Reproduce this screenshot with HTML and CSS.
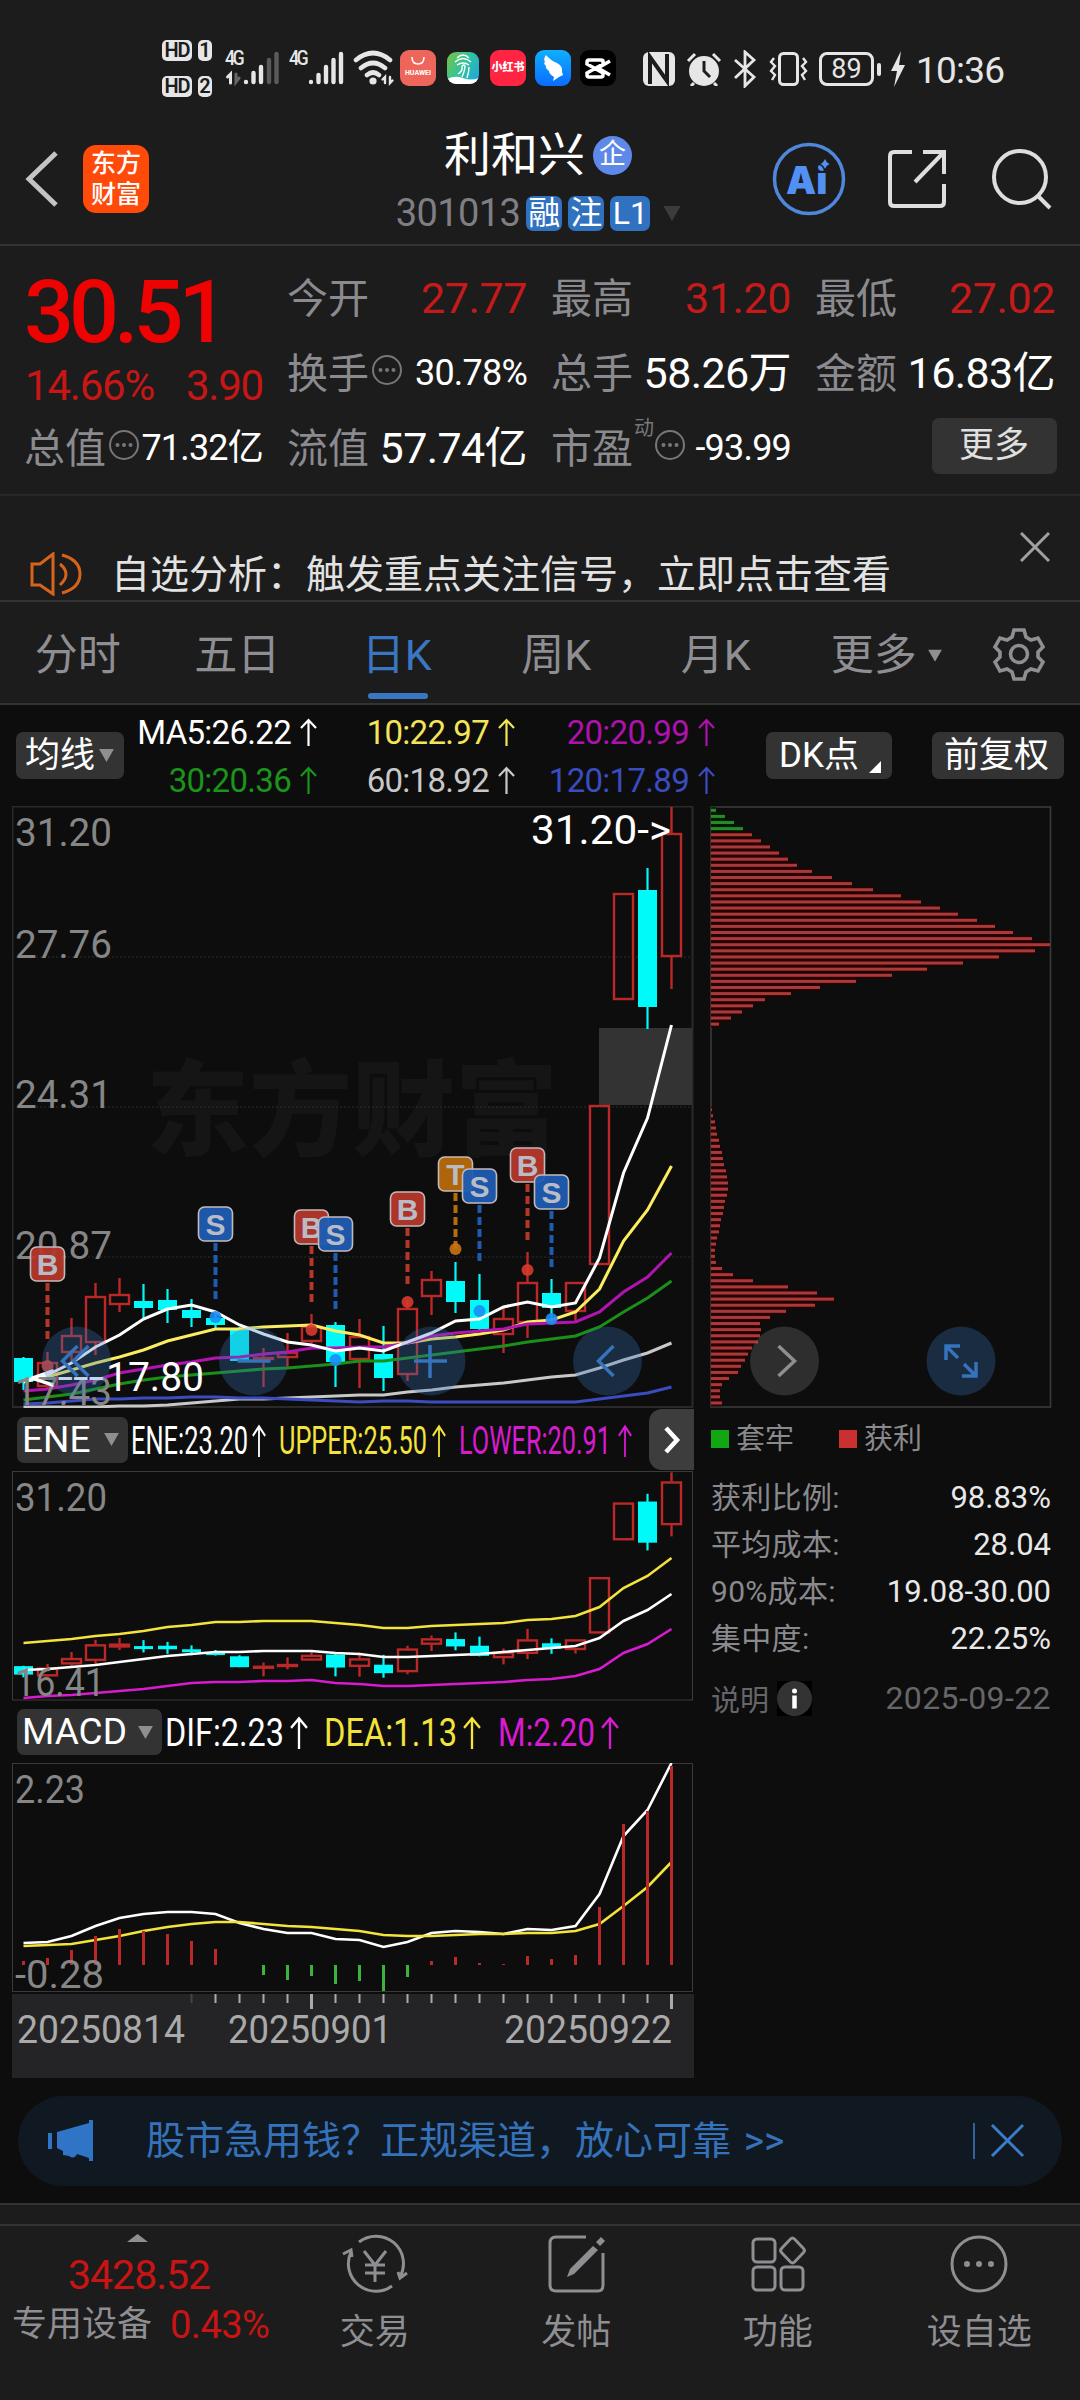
FILE: index.html
```html
<!DOCTYPE html>
<html lang="zh-CN">
<head>
    <meta charset="UTF-8">
    <meta name="viewport" content="width=device-width, initial-scale=1.0">
    <title>利和兴 301013</title>
    <link rel="stylesheet" href="styles.css">
</head>
<body>
    <svg class="defs" width="0" height="0">
        <symbol id="up" viewBox="0 0 17 28"><path d="M8.5 28V2M1 10l7.5-8 7.5 8" fill="none" stroke="currentColor" stroke-width="2.2"/></symbol>
        <symbol id="more-dots" viewBox="0 0 32 32"><circle cx="16" cy="16" r="14" fill="none" stroke="currentColor" stroke-width="2"/><circle cx="9.5" cy="16" r="2" fill="currentColor"/><circle cx="16" cy="16" r="2" fill="currentColor"/><circle cx="22.5" cy="16" r="2" fill="currentColor"/></symbol>
        <symbol id="tri" viewBox="0 0 16 14"><path d="M0 0h16L8 14z" fill="currentColor"/></symbol>
    </svg>

    <div class="status-bar">
        <div class="hd">
            <div><b>HD</b><b>1</b></div>
            <div><b>HD</b><b>2</b></div>
        </div>
        <div class="signal">
            <span>4G</span>
            <svg width="56" height="36" viewBox="0 0 56 36" stroke="#e6e6e6" stroke-width="4.4" stroke-linecap="round">
                <path d="M5.5 33V24l-3 3" fill="none" stroke-width="3"/><path d="M11 24v8l3-4" fill="none" stroke="#666" stroke-width="3"/>
                <path d="M21 32v0M28.5 32v-9M36 32V17"/><path d="M44 32V10M51.5 32V4" stroke="#5a5a5a"/>
            </svg>
        </div>
        <div class="signal second">
            <span>4G</span>
            <svg width="56" height="36" viewBox="0 0 56 36" stroke="#e6e6e6" stroke-width="4.4" stroke-linecap="round">
                <path d="M22 32v0M29.5 32v-7M37 32V17M44.5 32V10M52 32V4"/>
            </svg>
        </div>
        <svg class="wifi" width="42" height="36" viewBox="0 0 42 36" fill="none" stroke="#e6e6e6" stroke-width="4.6" stroke-linecap="round">
            <path d="M3 10Q20-4 37 10M8 18Q20 8 32 18M14 25Q20 20 26 25"/><circle cx="20" cy="31" r="3.6" fill="#e6e6e6" stroke="none"/>
            <path d="M32 33v-6l-2.5 2.500M37 27v6l2.500-2.500" stroke-width="2.4"/>
        </svg>
        <div class="app huawei"><svg width="20" height="10" viewBox="0 0 20 10"><path d="M4 1q0 7 6 7t6-7" fill="none" stroke="#fff" stroke-width="1.6"/></svg>HUAWEI</div>
        <div class="app finger">
            <svg width="32" height="32" viewBox="0 0 32 32" fill="none" stroke="#fff" stroke-width="1.4"><path d="M10 6q6-6 12 0M8 10q8-7 16 0M10 13q6-4 12 0M11 22q5-3 4-8 2-2 3 0 0 4-3 11M20 26q2-6 2-11"/><path d="M0 27q8-4 16-1t16 0v6H0z" fill="#fff" stroke="none"/></svg>
        </div>
        <div class="app redbook">小红书</div>
        <div class="app wing"><svg width="36" height="36" viewBox="0 0 36 36"><path d="M11 5q4 5 11 8 6 3 5 9l1 3-4 2-6 4 1-4q-5-3-5-6-4-3-3-5-3-3-1-4-2-3 1-7z" fill="#fff"/></svg></div>
        <div class="app capcut"><svg width="36" height="36" viewBox="0 0 36 36" fill="none" stroke="#fff" stroke-width="3.5"><path d="M30 11 18 18l12 7M23 14v-3q0-1-2-1H9q-2 0-2 2v2l16 9v2q0 2-2 2H9q-2 0-2-2v-2l16-9"/></svg></div>
        <div class="status-right">
            <svg width="32" height="34" viewBox="0 0 32 34" fill="none"><rect width="32" height="34" rx="6" fill="#e6e6e6"/><path d="M7 32V5l17 24V2" stroke="#1c1c1c" stroke-width="4"/></svg>
            <svg width="36" height="34" viewBox="0 0 36 34"><circle cx="18" cy="19" r="15" fill="#e6e6e6"/><path d="M2 9l7-7M34 9l-7-7M8 31l-3 3M28 31l3 3" stroke="#e6e6e6" stroke-width="3"/><path d="M18 9v10l6 6" fill="none" stroke="#1c1c1c" stroke-width="3"/></svg>
            <svg width="24" height="38" viewBox="0 0 24 38" fill="none" stroke="#e6e6e6" stroke-width="2.8"><path d="M2 10l19 17-9 9V2l9 8L2 28"/></svg>
            <svg width="40" height="34" viewBox="0 0 40 34" fill="none" stroke="#e6e6e6" stroke-width="3"><rect x="11.5" y="1.5" width="18" height="31" rx="4"/><path d="M6 6 3 10l4 4-4 5 4 4-3 5M35 6l3 4-4 4 4 5-4 4 3 5" stroke-width="2.4"/></svg>
            <div class="battery">89</div>
            <svg width="14" height="36" viewBox="0 0 14 36"><path d="M10 0 0 20h6L3 36l11-22H8z" fill="#e6e6e6"/></svg>
            <span class="clock">10:36</span>
        </div>
    </div>

    <header class="header">
        <div class="header-left">
            <svg width="34" height="56" viewBox="0 0 34 56"><path d="M31 2 4 28l27 26" fill="none" stroke="#c4c4c4" stroke-width="5"/></svg>
            <div class="logo">东方<br>财富</div>
        </div>
        <div class="header-title">
            <div class="name">利和兴<span class="company">企</span></div>
            <div class="code"><span>301013</span><i>融</i><i>注</i><i class="wide">L1</i><svg width="22" height="15"><use href="#tri"/></svg></div>
        </div>
        <div class="header-right">
            <svg width="74" height="74" viewBox="0 0 74 74">
                <circle cx="37" cy="37" r="34.5" fill="none" stroke="#4e87dc" stroke-width="3.5"/>
                <text x="14" y="52" class="ai">Ai</text>
                <path d="M53 14q1 7 7 8-6 1-7 8-1-7-7-8 6-1 7-8z" fill="#5291f4" stroke="#1c1c1c" stroke-width="1.5"/>
            </svg>
            <svg width="60" height="60" viewBox="0 0 60 60" fill="none" stroke="#dedede" stroke-width="4"><path d="M25 3H7q-4 0-4 4v46q0 4 4 4h46q4 0 4-4V35M36 3h21v22M57 3 28 33"/></svg>
            <svg width="60" height="62" viewBox="0 0 60 62" fill="none" stroke="#dedede" stroke-width="4"><circle cx="28" cy="29" r="26"/><path d="M46 48l12 12"/></svg>
        </div>
    </header>

    <section class="quote">
        <div class="price-box">
            <div class="price">30.51</div>
            <div class="change"><span>14.66%</span><span>3.90</span></div>
        </div>
        <div class="cell"><label>今开</label><span class="red">27.77</span></div>
        <div class="cell"><label>最高</label><span class="red">31.20</span></div>
        <div class="cell"><label>最低</label><span class="red">27.02</span></div>
        <div class="cell small"><label>换手</label><svg><use href="#more-dots"/></svg><span>30.78%</span></div>
        <div class="cell"><label>总手</label><span>58.26万</span></div>
        <div class="cell"><label>金额</label><span>16.83亿</span></div>
        <div class="cell small"><label>总值</label><svg><use href="#more-dots"/></svg><span>71.32亿</span></div>
        <div class="cell"><label>流值</label><span>57.74亿</span></div>
        <div class="cell small"><label>市盈</label><sup>动</sup><svg><use href="#more-dots"/></svg><span>-93.99</span></div>
        <div class="cell last"><button>更多</button></div>
    </section>

    <section class="notice">
        <svg width="52" height="44" viewBox="0 0 52 44" fill="none" stroke="#d8641c" stroke-width="3"><path d="M2 12h8L23 2v40L10 33H2zM30 12q12 10 0 21M32 3q18 5 18 19T32 41"/></svg>
        <p>自选分析：触发重点关注信号，立即点击查看</p>
        <svg class="close" width="30" height="30" viewBox="0 0 30 30"><path d="M1 1l28 28M29 1 1 29" stroke="#a0a0a0" stroke-width="3"/></svg>
    </section>

    <nav class="tabs">
        <div>分时</div>
        <div>五日</div>
        <div class="active">日K</div>
        <div>周K</div>
        <div>月K</div>
        <div>更多<svg width="14" height="13" viewBox="0 0 16 14"><use href="#tri"/></svg></div>
        <div class="gear">
            <svg width="54" height="54" viewBox="0 0 54 54" fill="none" stroke="#8e8e93" stroke-width="3.6"><circle cx="27" cy="27" r="8.5"/><path d="M22 3h10l2 7 5 3 7-2 5 9-5 5v5l5 5-5 9-7-2-5 3-2 7H22l-2-7-5-3-7 2-5-9 5-5v-5l-5-5 5-9 7 2 5-3z"/></svg>
        </div>
    </nav>

    <div class="ma-row">
        <button class="ma-select">均线<svg width="15" height="13" viewBox="0 0 16 14"><use href="#tri"/></svg></button>
        <div class="ma-values">
            <span class="ma5">MA5:26.22<svg><use href="#up"/></svg></span>
            <span class="ma10">10:22.97<svg><use href="#up"/></svg></span>
            <span class="ma20">20:20.99<svg><use href="#up"/></svg></span>
            <span class="ma30">30:20.36<svg><use href="#up"/></svg></span>
            <span class="ma60">60:18.92<svg><use href="#up"/></svg></span>
            <span class="ma120">120:17.89<svg><use href="#up"/></svg></span>
        </div>
        <button class="dk">DK点<svg width="12" height="12"><path d="M12 0v12H0z" fill="#fff"/></svg></button>
        <button class="fq">前复权</button>
    </div>

    <main class="charts">
        <div class="left">
            <svg id="kline" width="682" height="602" viewBox="12 806 682 602"></svg>
            <div class="indicator ene-bar">
                <button>ENE<svg width="15" height="13" viewBox="0 0 16 14"><use href="#tri"/></svg></button>
                <svg id="ene-values" width="510" height="46" viewBox="130 1416 510 46"></svg>
                <div class="next"><svg width="18" height="30" viewBox="0 0 18 30"><path d="M3 3l11 12L3 27" fill="none" stroke="#fff" stroke-width="4.5"/></svg></div>
            </div>
            <svg id="ene" width="682" height="230" viewBox="12 1471 682 230"></svg>
            <div class="indicator macd-bar">
                <button>MACD<svg width="15" height="13" viewBox="0 0 16 14"><use href="#tri"/></svg></button>
                <svg id="macd-values" width="470" height="46" viewBox="164 1708 470 46"></svg>
            </div>
            <svg id="macd" width="682" height="230" viewBox="12 1763 682 230"></svg>
            <svg id="dates" width="682" height="84" viewBox="12 1994 682 84"></svg>
        </div>
        <div class="right">
            <svg id="chips" width="342" height="602" viewBox="710 806 342 602"></svg>
            <div class="legend"><span class="lock">套牢</span><span class="gain">获利</span></div>
            <dl>
                <dt>获利比例:</dt><dd>98.83%</dd>
                <dt>平均成本:</dt><dd>28.04</dd>
                <dt>90%成本:</dt><dd>19.08-30.00</dd>
                <dt>集中度:</dt><dd>22.25%</dd>
            </dl>
            <div class="explain"><span>说明</span><div class="info"><svg width="35" height="35" viewBox="0 0 35 35"><circle cx="17.5" cy="17.5" r="17.5" fill="#333"/><circle cx="17.5" cy="10" r="2.5" fill="#fff"/><path d="M17.5 14.500v13" stroke="#fff" stroke-width="4.5"/></svg></div><time>2025-09-22</time></div>
        </div>
    </main>

    <div class="ad">
        <svg width="46" height="42" viewBox="0 0 46 42" fill="#2f74c5"><path d="M0 13h4v16H0zM9 12 41 3V0h4v41h-4v-3l-12-4q-3 6-8 2l-6-1v-4l-6-3z"/></svg>
        <p>股市急用钱？正规渠道，放心可靠 <span>&gt;&gt;</span></p>
        <svg class="ad-close" width="52" height="38" viewBox="0 0 52 38" fill="none" stroke="#3b7cc9"><path d="M1 1v36" stroke-width="1.5"/><path d="M19 3l31 31M50 3 19 34" stroke-width="3"/></svg>
    </div>

    <div class="strip"></div>
    <footer class="bottom-nav">
        <div class="index">
            <svg width="21" height="8" viewBox="0 0 21 8"><path d="M0 8h21L10.500 0z" fill="#8e8e93"/></svg>
            <strong>3428.52</strong>
            <div><span>专用设备</span><em>0.43%</em></div>
        </div>
        <div class="nav-item">
            <svg width="66" height="60" viewBox="0 0 66 60"><path d="M17 8A27.500 27.500 0 0 1 58 43M50 52A27.500 27.500 0 0 1 9 18M1 20l8-4 1 7M65 39l-7 5-2-6M22 17l11 14 11-14M33 30v18M23 31h20M23 39h20"/></svg>
            <span>交易</span>
        </div>
        <div class="nav-item">
            <svg width="66" height="60" viewBox="0 0 66 60"><path d="M43 3H13q-6 0-6 6v42q0 6 6 6h42q5 0 5-6V19"/><path d="M50 12l5 4-24 24-7 3 3-8zM53 8l5-5 4 4-5 5z" fill="#8e8e93" stroke="none"/></svg>
            <span>发帖</span>
        </div>
        <div class="nav-item">
            <svg width="66" height="60" viewBox="0 0 66 60"><rect x="8" y="5" width="22" height="23" rx="4"/><rect x="8" y="33" width="22" height="23" rx="4"/><rect x="36" y="33" width="22" height="23" rx="4"/><path d="M45.500 5q2-2 4 0l9 9.500q2 2 0 4l-9 9.500q-2 2-4 0l-9-9.500q-2-2 0-4z"/></svg>
            <span>功能</span>
        </div>
        <div class="nav-item">
            <svg width="66" height="60" viewBox="0 0 66 60"><circle cx="33" cy="30" r="27"/><g fill="#8e8e93" stroke="none"><circle cx="21" cy="30" r="3"/><circle cx="33" cy="30" r="3"/><circle cx="45" cy="30" r="3"/></g></svg>
            <span>设自选</span>
        </div>
    </footer>

    <script src="script.js"></script>
</body>
</html>
```
FILE: styles.css
```css
* {
    box-sizing: border-box;
}

body {
    margin: 0;
    width: 1080px;
    height: 2400px;
    overflow: hidden;
    background: #0d0d0d;
    color: #fff;
    font-family: Roboto, "Noto Sans CJK SC", sans-serif;
    display: flex;
    flex-direction: column;
}

svg {
    display: block;
    flex: none;
}

.defs {
    position: absolute;
}

button {
    border: 0;
    padding: 0;
    color: #fff;
    background: #333;
    border-radius: 7px;
    font: 35px/46px Roboto, "Noto Sans CJK SC", sans-serif;
    display: flex;
    align-items: center;
    white-space: nowrap;
}

button svg {
    color: #8e8e93;
}

p, dl, dd {
    margin: 0;
}

/* Status bar */
.status-bar {
    height: 122px;
    flex: none;
    padding: 40px 0 0 162px;
    background: #1c1c1c;
    display: flex;
    color: #e6e6e6;
}

.hd {
    width: 63px;
}

.hd div {
    display: flex;
    gap: 6px;
    height: 21px;
    margin-bottom: 15px;
}

.hd b {
    width: 14px;
    background: #e6e6e6;
    color: #1c1c1c;
    border-radius: 5px;
    font-size: 20px;
    font-weight: 600;
    line-height: 21px;
    text-align: center;
}

.hd b:first-child {
    width: 30px;
    letter-spacing: -1px;
}

.signal {
    position: relative;
    margin-top: 10px;
    width: 65px;
}

.signal.second {
    width: 64px;
    margin-left: -1px;
}

.signal span {
    position: absolute;
    top: 0;
    left: 0;
    font-size: 21px;
    font-weight: 500;
    line-height: 17px;
    letter-spacing: -3px;
    transform: scaleX(0.85);
    transform-origin: left;
}

.wifi {
    margin: 10px 5px 0 0;
}

.app {
    width: 36px;
    height: 36px;
    margin: 10px 9px 0 0;
    border-radius: 9px;
    overflow: hidden;
    flex: none;
}

.huawei {
    background: #ee655c;
    font-size: 7px;
    line-height: 8px;
    font-weight: bold;
    text-align: center;
    color: #fff;
}

.huawei svg {
    margin: 6px auto 3px;
}

.finger {
    width: 32px;
    height: 32px;
    margin: 12px 11px 0 2px;
    background: linear-gradient(120deg, #7bc142, #2fc4a0 50%, #1ea2e8);
}

.redbook {
    background: #ff2442;
    font-size: 11px;
    font-weight: 900;
    line-height: 36px;
    text-align: center;
    color: #fff;
}

.wing {
    background: linear-gradient(#0fb0ff, #0a6cff);
}

.capcut {
    background: #000;
}

.status-right {
    margin: 11px 0 0 18px;
    height: 36px;
    display: flex;
    align-items: center;
    gap: 11px;
}

.battery {
    position: relative;
    width: 55px;
    height: 34px;
    margin-right: 6px;
    border: 3px solid #e6e6e6;
    border-radius: 8px;
    text-align: center;
    font-size: 27px;
    line-height: 29px;
}

.battery::after {
    content: "";
    position: absolute;
    right: -10px;
    top: 8px;
    width: 4px;
    height: 13px;
    border-radius: 2px;
    background: #e6e6e6;
}

.clock {
    padding-top: 3px;
    font-size: 37px;
    line-height: 36px;
    letter-spacing: -0.8px;
}

/* Header */
.header {
    height: 124px;
    flex: none;
    padding: 0 28px 0 25px;
    background: #1c1c1c;
    border-bottom: 2px solid #333;
    display: flex;
    justify-content: space-between;
}

.header-left {
    display: flex;
    align-items: center;
    height: 113px;
    gap: 24px;
    width: 330px;
}

.logo {
    width: 66px;
    height: 68px;
    padding-top: 3px;
    border-radius: 13px;
    background: #ff4a0a;
    font-size: 25px;
    line-height: 31px;
    font-weight: 500;
    text-align: center;
}

.header-title {
    display: flex;
    flex-direction: column;
    align-items: center;
    margin-right: 51px;
}

.name {
    display: flex;
    align-items: center;
    height: 66px;
    font-size: 47px;
    line-height: 66px;
}

.company {
    width: 39px;
    height: 39px;
    margin-left: 8px;
    border-radius: 50%;
    background: #5f89e8;
    font-size: 27px;
    line-height: 37px;
    text-align: center;
}

.code {
    display: flex;
    align-items: center;
    gap: 6px;
    height: 50px;
    margin-right: -3px;
    font-size: 38px;
    letter-spacing: -0.6px;
    color: #7e7e84;
}

.code i {
    width: 36px;
    height: 35px;
    border-radius: 7px;
    background: #3072c0;
    color: #fff;
    font-size: 32px;
    line-height: 34px;
    font-style: normal;
    letter-spacing: 0;
    text-align: center;
}

.code .wide {
    width: 40px;
}

.code svg {
    margin-left: 5px;
    color: #3c3c3c;
}

.header-right {
    display: flex;
    align-items: center;
    height: 113px;
    gap: 41px;
}

.header-right svg:last-child {
    margin-left: 4px;
}

.ai {
    font: 900 38px Inter, Roboto, sans-serif;
    fill: #5291f4;
}

/* Quote */
.quote {
    height: 250px;
    flex: none;
    padding: 15px 25px 0 26px;
    background: #1c1c1c;
    border-bottom: 2px solid #272727;
    display: grid;
    grid-template-columns: 237px 238px 238px 238px;
    grid-auto-rows: 75px;
    column-gap: 26px;
}

.price-box {
    grid-row: span 2;
    color: #c61616;
}

.price {
    margin-left: -2px;
    margin-top: 3px;
    font-size: 88px;
    line-height: 96px;
    font-weight: 500;
    letter-spacing: -5px;
    color: #ee0202;
}

.change {
    margin-top: 6px;
    margin-left: -1px;
    display: flex;
    justify-content: space-between;
    font-size: 42px;
    line-height: 40px;
    letter-spacing: -1.2px;
}

.cell {
    display: flex;
    align-items: center;
    line-height: 75px;
    white-space: nowrap;
}

.cell label {
    margin-left: -2px;
    padding-top: 1px;
    font-size: 41px;
    color: #8a8a8f;
}

.cell span {
    margin-left: auto;
    font-size: 43px;
    letter-spacing: -0.6px;
}

.cell .red {
    color: #c61a1a;
    letter-spacing: -0.4px;
}

.cell.small span {
    font-size: 36px;
    letter-spacing: -0.8px;
}

.cell svg {
    width: 32px;
    height: 32px;
    margin: 0 0 8px 2px;
    color: #77777b;
}

.cell sup {
    align-self: flex-start;
    margin-left: 1px;
    font-size: 20px;
    line-height: 34px;
    color: #77777b;
}

.cell sup + svg {
    margin-left: 0;
}

.cell button {
    width: 125px;
    height: 56px;
    margin: 0 -2px 5px auto;
    padding: 0 27px;
    color: #e0e0e0;
}

/* Notice */
.notice {
    height: 106px;
    flex: none;
    padding-left: 30px;
    background: #1c1c1c;
    border-bottom: 2px solid #333;
    display: flex;
    overflow: hidden;
}

.notice > svg:first-child {
    margin-top: 56px;
}

.notice p {
    margin: 49px 0 0 29px;
    font-size: 39px;
    line-height: 60px;
    color: #e2e2e2;
}

.notice .close {
    margin: 36px 30px 0 auto;
}

/* Tabs */
.tabs {
    height: 103px;
    flex: none;
    background: #1c1c1c;
    border-bottom: 2px solid #333;
    display: grid;
    grid-template-columns: repeat(6, 159.5px) 1fr;
    font-size: 43px;
    line-height: 102px;
    color: #8e8e93;
}

.tabs div {
    position: relative;
    display: flex;
    align-items: center;
    justify-content: center;
    padding: 2px 4px 0 0;
}

.tabs div:nth-child(6) {
    padding-left: 22px;
    gap: 11px;
}

.tabs .gear {
    padding: 0;
}

.tabs .active {
    color: #3a77c2;
}

.tabs .active::after {
    content: "";
    position: absolute;
    left: 49px;
    bottom: 7px;
    width: 60px;
    height: 6px;
    border-radius: 3px;
    background: #3a77c2;
}

/* Moving averages */
.ma-row {
    height: 101px;
    flex: none;
    padding: 0 16px;
    display: flex;
    align-items: flex-start;
}

.ma-row button {
    height: 47px;
    margin-top: 27px;
}

.ma-row .ma-select {
    width: 108px;
    padding-left: 9px;
    gap: 4px;
}

.ma-values {
    padding-top: 3px;
    width: 591px;
    display: grid;
    grid-template-columns: 193px 198px 200px;
    grid-auto-rows: 48px;
    align-items: center;
    font-size: 33px;
    letter-spacing: -0.7px;
}

.ma-values span {
    display: flex;
    align-items: center;
    justify-content: flex-end;
    gap: 9px;
}

.ma-values svg {
    width: 17px;
    height: 28px;
}

.ma10 { color: #f3e45a; }
.ma20 { color: #ae12ae; }
.ma30 { color: #1a951a; }
.ma60 { color: #c8c8c8; }
.ma120 { color: #3a4cc0; }

.ma-row .dk {
    width: 126px;
    margin-left: 51px;
    padding-left: 13px;
    gap: 10px;
}

.dk svg {
    margin-top: 23px;
}

.ma-row .fq {
    width: 132px;
    margin-left: 40px;
    padding-left: 12px;
}

/* Charts */
.charts {
    height: 1272px;
    flex: none;
    padding-left: 12px;
    display: flex;
    gap: 16px;
}

.left {
    width: 682px;
}

.indicator {
    display: flex;
    align-items: center;
    padding-left: 5px;
}

.indicator button {
    height: 46px;
    padding: 0 9px 0 5px;
    justify-content: space-between;
    font-size: 37px;
}

.ene-bar {
    height: 63px;
}

.ene-bar button {
    width: 111px;
    margin-right: 2px;
}

.macd-bar {
    height: 62px;
}

.macd-bar button {
    width: 145px;
    margin-right: 2px;
}

.next {
    width: 45px;
    height: 61px;
    margin-left: auto;
    border-radius: 13px 0 0 13px;
    background: #3d3d3d;
    display: grid;
    place-items: center;
}

#dates {
    margin-top: 1px;
    background: #242426;
}

svg text {
    font-family: Roboto, "Noto Sans CJK SC", sans-serif;
}

.axis {
    font-size: 39px;
    fill: #868686;
}

.tag {
    font: bold 30px "Liberation Sans", sans-serif;
    fill: #b9bcc6;
    text-anchor: middle;
}

.mark {
    font-size: 40px;
    fill: #fff;
}

svg .watermark {
    font-family: "Noto Sans CJK SC", sans-serif;
    font-size: 104px;
    font-weight: 900;
    fill: #151515;
}

/* Chip panel */
.right {
    width: 342px;
}

.legend {
    display: flex;
    margin-top: 9px;
    font-size: 29px;
    line-height: 44px;
    color: #8a8a8e;
}

.legend span {
    width: 128px;
    display: flex;
    align-items: center;
    gap: 7px;
}

.legend span::before {
    content: "";
    width: 18px;
    height: 18px;
    margin-left: 1px;
    background: #12a712;
}

.legend .gain::before {
    background: #ca3030;
}

.right dl {
    margin-top: 13px;
    padding: 0 1px;
    display: grid;
    grid-template-columns: auto 1fr;
    grid-auto-rows: 47px;
    line-height: 47px;
}

.right dt {
    font-size: 30px;
    letter-spacing: 0.3px;
    color: #8a8a8e;
}

.right dd {
    font-size: 31px;
    text-align: right;
    color: #e8e8e8;
}

.explain {
    margin-top: 12px;
    padding: 0 1px;
    height: 48px;
    display: flex;
    align-items: center;
    font-size: 29px;
    color: #66666a;
}

.info {
    margin-left: 8px;
    background: #000;
}

.explain time {
    margin-left: auto;
    font-size: 32px;
    letter-spacing: 0.4px;
}

/* Loan banner */
.ad {
    height: 90px;
    flex: none;
    margin: 18px 18px 17px;
    padding: 0 37px 0 30px;
    border-radius: 45px;
    background: #101922;
    color: #3572ba;
    display: flex;
    align-items: center;
    font-size: 39px;
}

.ad p {
    margin-left: 52px;
    line-height: 90px;
}

.ad span {
    margin-left: 3px;
}

.ad-close {
    margin-left: auto;
}

/* Bottom navigation */
.strip {
    height: 21px;
    flex: none;
    background: #1c1c1c;
    border-top: 2px solid #333;
}

.bottom-nav {
    flex: 1;
    background: #1c1c1c;
    border-top: 2px solid #333;
    display: grid;
    grid-template-columns: 274px repeat(4, 201.5px);
    color: #8e8e93;
}

.index {
    padding: 8px 0 0 12px;
}

.index svg {
    margin-left: 115px;
}

.index strong {
    display: block;
    padding-left: 56px;
    margin-top: 9px;
    font-size: 41px;
    line-height: 48px;
    font-weight: normal;
    letter-spacing: -1px;
    color: #c81414;
}

.index div {
    display: flex;
    align-items: center;
    gap: 18px;
    font-size: 35px;
    line-height: 44px;
    margin-top: 4px;
}

.index em {
    font-style: normal;
    font-size: 38px;
    letter-spacing: -0.5px;
    color: #c81414;
}

.nav-item {
    padding-top: 8px;
    display: flex;
    flex-direction: column;
    align-items: center;
    font-size: 35px;
    line-height: 48px;
}

.nav-item svg {
    margin-bottom: 15px;
    fill: none;
    stroke: #8e8e93;
    stroke-width: 3;
}
```
FILE: script.js
```js
const RED = '#bb2828';
const CYAN = '#00fafa';

const x = i => 23.5 + 24 * i;

// type, high, body top, body bottom, low
const candles = [
    ['c', 1357, 1358, 1382, 1390], ['r', 1352, 1362, 1387, 1388], ['r', 1318, 1335, 1353, 1363], ['r', 1283, 1296, 1343, 1355],
    ['r', 1278, 1294, 1305, 1312], ['c', 1284, 1301, 1308, 1319], ['c', 1289, 1300, 1310, 1323], ['c', 1299, 1310, 1318, 1327],
    ['c', 1312, 1318, 1325, 1328], ['c', 1327, 1330, 1361, 1361], ['r', 1348, 1357, 1360, 1387], ['r', 1333, 1352, 1358, 1367],
    ['r', 1314, 1326, 1342, 1343], ['c', 1322, 1325, 1362, 1387], ['r', 1319, 1336, 1360, 1388], ['c', 1326, 1354, 1378, 1391],
    ['r', 1300, 1308, 1375, 1381], ['r', 1271, 1279, 1297, 1315], ['c', 1262, 1281, 1302, 1313], ['c', 1274, 1300, 1329, 1330],
    ['r', 1308, 1318, 1335, 1353], ['r', 1252, 1282, 1323, 1338], ['c', 1279, 1293, 1308, 1323], ['r', 1282, 1282, 1312, 1322],
    ['r', 1105, 1105, 1265, 1265], ['r', 893, 893, 1000, 1000], ['c', 868, 890, 1007, 1029], ['r', 807, 833, 957, 989]
];

const averages = {
    '#c8c8c8': [1407, 1407, 1407, 1407, 1406, 1406, 1405, 1403, 1401, 1399, 1399, 1398, 1397, 1396, 1395, 1395, 1392, 1390, 1387, 1385, 1383, 1380, 1377, 1375, 1368, 1360, 1353, 1343],
    '#3a4cc0': [1404, 1403, 1401, 1399, 1399, 1398, 1398, 1397, 1397, 1398, 1398, 1399, 1400, 1401, 1402, 1401, 1401, 1402, 1402, 1402, 1402, 1402, 1402, 1402, 1399, 1396, 1393, 1387],
    '#1a8f1a': [1400, 1397, 1394, 1389, 1384, 1380, 1377, 1375, 1373, 1371, 1369, 1368, 1366, 1364, 1361, 1361, 1358, 1355, 1352, 1349, 1346, 1342, 1339, 1336, 1327, 1312, 1298, 1281],
    '#fbec60': [1380, 1377, 1370, 1363, 1357, 1350, 1341, 1335, 1329, 1329, 1327, 1326, 1325, 1331, 1335, 1343, 1343, 1339, 1337, 1334, 1330, 1322, 1320, 1312, 1289, 1241, 1210, 1166],
    '#b114b1': [1391, 1389, 1385, 1380, 1373, 1369, 1365, 1362, 1358, 1357, 1354, 1352, 1348, 1348, 1347, 1347, 1343, 1336, 1333, 1331, 1329, 1324, 1323, 1322, 1312, 1292, 1277, 1253],
    '#ffffff': [1382, 1375, 1363, 1347, 1335, 1319, 1309, 1305, 1312, 1325, 1334, 1342, 1345, 1351, 1348, 1351, 1342, 1333, 1321, 1319, 1307, 1302, 1307, 1303, 1258, 1173, 1118, 1025]
};

const eneLines = {
    '#f3e33c': [1643, 1641, 1639, 1636, 1634, 1631, 1627, 1625, 1622, 1622, 1621, 1621, 1621, 1623, 1625, 1628, 1628, 1626, 1625, 1624, 1623, 1620, 1619, 1616, 1607, 1588, 1576, 1558],
    '#ffffff': [1670, 1669, 1667, 1665, 1662, 1659, 1656, 1654, 1652, 1652, 1651, 1651, 1651, 1653, 1654, 1657, 1657, 1656, 1655, 1654, 1652, 1650, 1648, 1646, 1638, 1621, 1610, 1594],
    '#d81bd0': [1698, 1696, 1695, 1693, 1691, 1689, 1686, 1683, 1682, 1682, 1681, 1681, 1680, 1683, 1684, 1686, 1686, 1685, 1684, 1683, 1682, 1680, 1679, 1676, 1669, 1653, 1644, 1629]
};

const macdLines = {
    '#ffffff': [1943, 1942, 1936, 1926, 1918, 1914, 1912, 1912, 1914, 1923, 1929, 1933, 1933, 1939, 1940, 1947, 1942, 1933, 1931, 1932, 1934, 1929, 1930, 1926, 1894, 1836, 1810, 1763],
    '#f3e33c': [1946, 1945, 1944, 1940, 1936, 1931, 1927, 1924, 1922, 1922, 1924, 1926, 1927, 1929, 1931, 1935, 1936, 1936, 1935, 1934, 1934, 1933, 1933, 1931, 1924, 1906, 1887, 1862]
};

const macdBars = [1961, 1958, 1950, 1936, 1929, 1931, 1934, 1941, 1949, 1965, 1975, 1980, 1976, 1984, 1981, 1991, 1977, 1961, 1957, 1963, 1964, 1956, 1959, 1955, 1907, 1824, 1811, 1766];

// letter, candle index, badge y, dot y
const signals = [
    ['B', 1, 1264, 1366], ['S', 8, 1224, 1317], ['B', 12, 1227, 1330], ['S', 13, 1234, 1360], ['B', 16, 1209, 1302],
    ['T', 18, 1174, 1249], ['S', 19, 1186, 1311], ['B', 21, 1165, 1270], ['S', 22, 1192, 1319]
];
const signalColors = { B: '#b5372a', S: '#1d5cb2', T: '#b86b0c' };
const dotColors = { B: '#d83a2c', S: '#1c8cf5', T: '#c87412' };

const chipsTop = [5, 14, 23, 32, 41, 50, 59, 68, 77, 86, 101, 121, 141, 162, 190, 210, 229, 247, 266, 284, 302, 321, 339, 324, 288, 252, 216, 181, 145, 109, 80, 54, 42, 31, 20, 8];
const chipsBottom = [1, 2, 4, 5, 6, 8, 9, 11, 12, 13, 15, 16, 17, 17, 16, 14, 13, 12, 10, 9, 8, 6, 5, 4, 4, 5, 11, 22, 42, 77, 106, 123, 104, 75, 59, 49, 50, 49, 47, 41, 37, 34, 30, 27, 18, 11, 9, 9, 11];

function line(x1, y1, x2, y2, color, w, extra = '') {
    return `<line x1="${x1}" y1="${y1}" x2="${x2}" y2="${y2}" stroke="${color}" stroke-width="${w}" ${extra}/>`;
}

function rect(x, y, w, h, fill, extra = '') {
    return `<rect x="${x}" y="${y}" width="${w}" height="${h}" fill="${fill}" ${extra}/>`;
}

function label(cls, x, y, w, str) {
    return `<text class="${cls}" x="${x}" y="${y}" textLength="${w}" lengthAdjust="spacingAndGlyphs">${str}</text>`;
}

function curves(set, w) {
    return Object.entries(set).map(([color, ys]) =>
        `<polyline points="${ys.map((y, i) => x(i) + ',' + y).join(' ')}" fill="none" stroke="${color}" stroke-width="${w}"/>`).join('');
}

function drawCandles(toY) {
    return candles.map(([type, ...v], i) => {
        const [high, top, bottom, low] = v.map(toY);
        const cx = x(i);
        if (type === 'c') {
            return line(cx, high, cx, low, CYAN, 2.2) + rect(cx - 9.5, top, 19, Math.max(bottom - top, 3), CYAN);
        }
        return line(cx, high, cx, top, RED, 2.4) + line(cx, bottom, cx, low, RED, 2.4)
            + rect(cx - 9.5, top + 1, 19, Math.max(bottom - top - 2, 1), 'none', `stroke="${RED}" stroke-width="2.4"`);
    }).join('');
}

function drawSignals() {
    let out = '';
    signals.forEach(([t, i, y, dot]) => {
        const cx = x(i);
        out += line(cx, y + 19, cx, y + 75, signalColors[t], 4, 'stroke-dasharray="8 4"');
        out += `<circle cx="${cx}" cy="${dot}" r="6" fill="${dotColors[t]}" fill-opacity=".9"/>`;
        out += rect(cx - 17, y - 17, 34, 34, signalColors[t], 'rx="6" stroke="#c3b9bb" stroke-width="1.6" fill-opacity=".95"');
        out += `<text class="tag" x="${cx}" y="${y + 11}">${t}</text>`;
    });
    return out;
}

function roundButton(cx, path, fill = '#3573bb', stroke = '#3573bb') {
    return `<circle cx="${cx}" cy="1361" r="34.5" fill="${fill}" fill-opacity=".3"/>`
        + `<path transform="translate(${cx} 1361)" d="${path}" fill="none" stroke="${stroke}" stroke-width="3.5"/>`;
}

function drawKline() {
    let out = label('watermark', 146, 1148, 412, '东方财富');
    out += rect(12.5, 806.5, 680, 600.5, 'none', 'stroke="#2a2a2a" stroke-width="2"');
    [957, 1107, 1257].forEach(y => out += line(12, y, 693, y, '#2d2d2d', 1, 'stroke-dasharray="2 2"'));
    out += rect(599, 1028, 93, 77, '#333');
    out += drawCandles(y => y);
    out += curves(averages, 3);
    [[846, '31.20'], [958, '27.76'], [1108, '24.31'], [1259, '20.87'], [1405, '17.43']]
        .forEach(([y, s]) => out += label('axis', 15, y, 97, s));
    out += drawSignals();
    out += label('mark', 531, 844, 140, '31.20-&gt;');
    out += label('mark', 29, 1391, 75, '&lt;---');
    out += label('mark', 106, 1391, 98, '17.80');
    out += roundButton(76.5, 'M1-15-14 0 1 15M12-15-3 0 12 15');
    out += roundButton(253.5, 'M-16 0H17');
    out += roundButton(431, 'M-17 0H16M-1-16V17');
    out += roundButton(607.5, 'M6-15-9 0 6 15');
    return out;
}

function drawChips() {
    let out = '';
    const bar = (w, i, color, shade) => {
        const y = 810.3 + 6.11 * i;
        out += rect(711, y - 3, w, 6.2, shade) + rect(711, y - 1.5, w, 3, color);
    };
    out += rect(711, 807, 339.5, 600, 'none', 'stroke="#3a3a3a" stroke-width="1.6"');
    chipsTop.forEach((w, i) => i < 4 ? bar(w, i, '#268c26', '#031a03') : bar(w, i, '#aa3a3a', '#280202'));
    chipsBottom.forEach((w, i) => bar(w, i + 49, '#aa3a3a', '#280202'));
    out += roundButton(784.5, 'M-6-15 10 0-6 15', '#7a7a7a', '#8e8e93');
    out += roundButton(961, 'M-3-3-15-15M-15-1V-15H-1M3 3 15 15M15 1V15H1');
    return out;
}

function drawValues(items, baseline) {
    return items.map(([str, from, to, ax, aw, color]) =>
        label('mark', from - 2, baseline, to - from + 4, str).replace('class="mark"', `style="font-size:39px;fill:${color}"`)
        + `<svg x="${ax}" y="${baseline - 30}" width="${aw}" height="33" viewBox="0 0 17 28" preserveAspectRatio="none" color="${color}"><use href="#up" width="17" height="28"/></svg>`).join('');
}

document.getElementById('kline').innerHTML = drawKline();
document.getElementById('chips').innerHTML = drawChips();

document.getElementById('ene-values').innerHTML = drawValues([
    ['ENE:23.20', 133, 246, 252, 14, '#ffffff'],
    ['UPPER:25.50', 281, 425, 432, 14, '#f3e33c'],
    ['LOWER:20.91', 461, 609, 618, 14, '#d81bd0']
], 1453);

document.getElementById('ene').innerHTML =
    rect(12.5, 1471.5, 680, 228.5, 'none', 'stroke="#3a3a3a"')
    + drawCandles(y => 1472 + (y - 806) * 0.3517)
    + curves(eneLines, 2.6)
    + label('axis', 15, 1511, 92, '31.20') + label('axis', 15, 1696, 90, '16.41');

document.getElementById('macd-values').innerHTML = drawValues([
    ['DIF:2.23', 167, 282, 290, 18, '#ffffff'],
    ['DEA:1.13', 326, 455, 463, 18, '#f3e33c'],
    ['M:2.20', 500, 593, 601, 18, '#d81bd0']
], 1745);

let macd = rect(12.5, 1763.5, 680, 228, 'none', 'stroke="#3a3a3a"');
macd += curves(macdLines, 2.6);
macdBars.forEach((y, i) => macd += line(x(i), 1965, x(i), y, y > 1965 ? '#3cb43c' : RED, 3));
macd += label('axis', 15, 1803, 70, '2.23') + label('axis', 15, 1988, 89, '-0.28');
document.getElementById('macd').innerHTML = macd;

let dates = '';
for (let i = 7; i < 28; i++) {
    const long = i === 12 || i === 27;
    dates += line(x(i), 1994, x(i), long ? 2009 : 2003, i === 7 ? '#444' : '#aaa', long ? 3 : 2);
}
dates += [[17, 168, '20250814'], [228, 164, '20250901'], [504, 168, '20250922']]
    .map(([from, w, s]) => label('axis', from, 2043, w, s).replace('class="axis"', 'style="font-size:38px;fill:#aaa"')).join('');
document.getElementById('dates').innerHTML = dates;
```
